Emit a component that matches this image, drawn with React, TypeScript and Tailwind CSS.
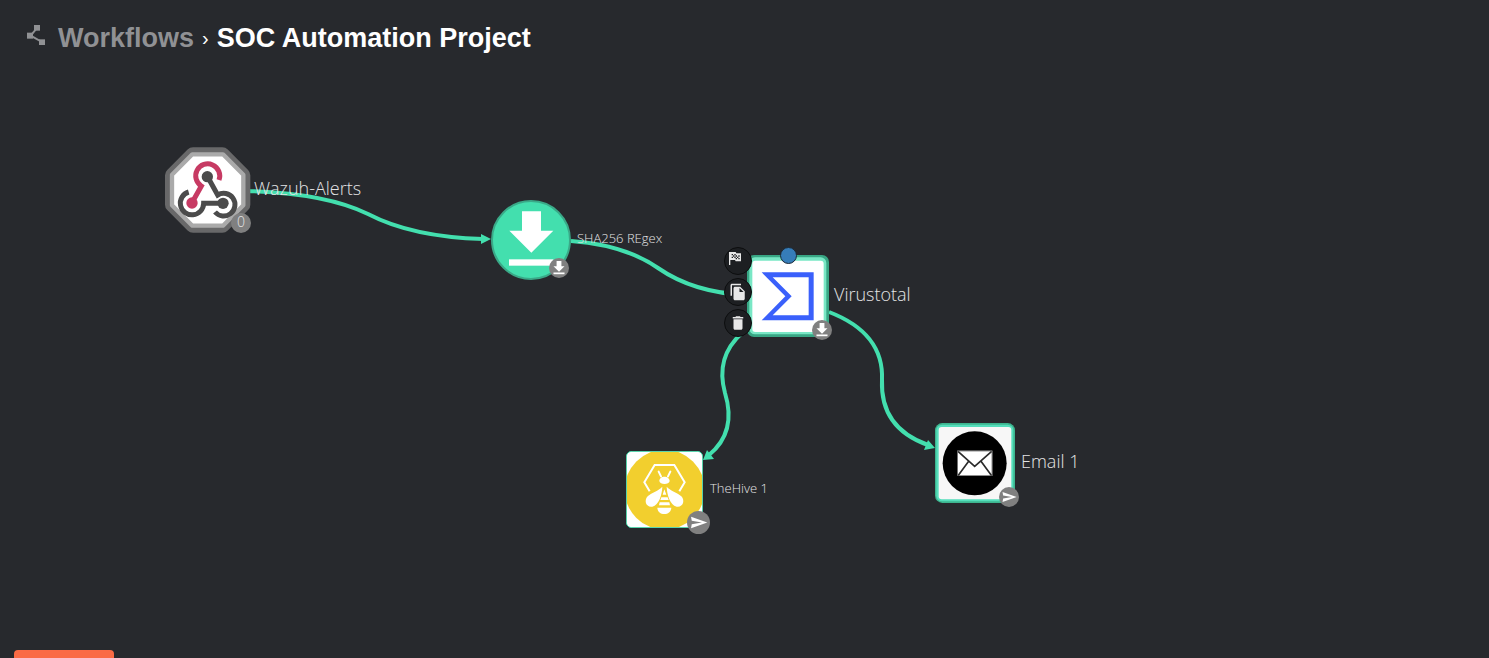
import type { ReactNode } from "react";
import { MdDelete, MdFileCopy } from "react-icons/md";

function WorkflowIcon() {
  return (
    <svg viewBox="0 0 54 60" className="h-5 w-[18px] fill-[#909194]" aria-hidden="true">
      <path d="M29 10L11 32L45 51" fill="none" stroke="#909194" strokeWidth="6" />
      <rect x="21" width="18" height="17" />
      <rect y="23" width="18" height="18" />
      <rect x="36" y="43" width="18" height="17" />
    </svg>
  );
}

function WebhookNode() {
  return (
    <svg viewBox="45 36 258 258" className="size-[86px] shrink-0" aria-hidden="true">
      <g strokeLinejoin="round" transform="translate(173 165)">
        <path
          d="M-44 -105H44L105 -44V44L44 105H-44L-105 44V-44Z"
          fill="#aaaaaa"
          stroke="#686869"
          strokeWidth="46"
        />
        <path
          d="M-46 -107H46L107 -46V46L46 107H-46L-107 46V-46Z"
          fill="#ffffff"
          stroke="#aaaaaa"
          strokeWidth="13"
        />
      </g>
      <g fill="none" strokeWidth="15">
        <path d="M207 135A36 36 0 1 0 154 153L126 203" stroke="#c73a63" />
        <path d="M172 124L203 180A34 34 0 1 1 195 231" stroke="#4b4b4b" />
        <path d="M116 171A35 35 0 1 0 161 205H219" stroke="#4b4b4b" />
      </g>
      <circle cx="126" cy="204" r="17" fill="#c73a63" />
      <circle cx="172" cy="125" r="17" fill="#4b4b4b" />
      <circle cx="219" cy="205" r="17" fill="#4b4b4b" />
    </svg>
  );
}

function DownloadNode() {
  return (
    <svg viewBox="63 30 240 240" className="size-20 shrink-0" aria-hidden="true">
      <circle cx="183" cy="150" r="117" fill="#43dfae" stroke="#3aa988" strokeWidth="6" />
      <path d="M156 64H213V122H250L184 188L118 122H156Z" fill="#fff" />
      <rect x="117" y="208" width="133" height="19" fill="#fff" />
    </svg>
  );
}

function VirusTotalNode() {
  return (
    <svg viewBox="111 60 246 246" className="size-[82px] shrink-0" aria-hidden="true">
      <rect x="111" y="60" width="246" height="246" rx="21" fill="#38a684" />
      <rect x="118" y="67" width="231" height="231" rx="17" fill="#79e7c5" />
      <rect x="127" y="77" width="214" height="214" rx="9" fill="#fff" />
      <path
        fillRule="evenodd"
        fill="#3a60fb"
        d="M155 112H311V256H155L226 184ZM188 127L245 184L188 241H296V127Z"
      />
    </svg>
  );
}

function HiveNode() {
  return (
    <svg viewBox="48 63 231 231" className="size-[77px] shrink-0" aria-hidden="true">
      <defs>
        <clipPath id="hive-frame">
          <rect x="51" y="66" width="225" height="225" rx="14" />
        </clipPath>
      </defs>
      <rect x="49" y="64" width="229" height="229" rx="16" fill="#fff" stroke="#43d6a8" strokeWidth="3" />
      <circle cx="164" cy="179" r="120" fill="#f2cf2e" clipPath="url(#hive-frame)" />
      <path
        d="M119 184L103 157L134 105H193L224 157L208 184"
        fill="none"
        stroke="#fff"
        strokeWidth="6"
      />
      <path d="M146 125L153 139M181 125L174 139" stroke="#fff" strokeWidth="6" strokeLinecap="round" />
      <path d="M148 153C148 136 178 136 179 153C178 165 149 165 148 153Z" fill="#fff" />
      <path
        d="M157 170C156 195 147 224 127 230C108 233 101 212 113 199C126 187 145 183 157 170Z"
        fill="#fff"
      />
      <path
        d="M170 170C171 195 180 224 200 230C219 233 226 212 214 199C201 187 182 183 170 170Z"
        fill="#fff"
      />
      <path d="M163 178L169 194H158ZM154 202H173L176 210H151ZM149 217H178L180 226H147Z" fill="#fff" />
      <path d="M142 233H184C183 246 174 252 163 252C151 252 143 246 142 233Z" fill="#fff" />
    </svg>
  );
}

function EmailNode() {
  return (
    <svg viewBox="107 39 240 240" className="size-20 shrink-0" aria-hidden="true">
      <rect x="107" y="39" width="240" height="240" rx="22" fill="#3db58f" />
      <rect x="111" y="44" width="231" height="230" rx="17" fill="#55debb" />
      <rect x="118" y="51" width="218" height="217" rx="9" fill="#f7f7f7" />
      <circle cx="226" cy="160" r="96" fill="#000" />
      <rect x="174" y="122" width="105" height="76" fill="#fff" />
      <path
        d="M176 124L226 169L277 124M176 197L208 154M277 197L245 154"
        fill="none"
        stroke="#2b2b2b"
        strokeWidth="5"
      />
      <rect x="175" y="123" width="103" height="74" fill="none" stroke="#555" strokeWidth="2" />
    </svg>
  );
}

function DownloadBadge() {
  return (
    <svg viewBox="0 0 58 58" className="size-5" aria-hidden="true">
      <circle cx="29" cy="29" r="29" fill="#808080" />
      <path d="M22 9H36V24H45L29 40L13 24H22Z" fill="#fff" />
      <rect x="13" y="42" width="32" height="5" fill="#fff" />
    </svg>
  );
}

function SendBadge({ size }: { size: string }) {
  return (
    <svg viewBox="0 0 68 68" className={size} aria-hidden="true">
      <circle cx="34" cy="34" r="34" fill="#808080" />
      <path d="M12 17L60 34L12 51L14 39L44 34L14 29Z" fill="#fff" />
    </svg>
  );
}

function FlagIcon() {
  return (
    <svg viewBox="0 0 36 39" className="h-[13px] w-3" aria-hidden="true">
      <path fill="#e8e8e8" d="M0 0H20L22 4H36V28H20L18 24H4V39H0Z" />
      <path
        fill="#1d1f22"
        d="M8 6h4v4h-4zM16 6h4v4h-4zM12 10h4v4h-4zM20 10h4v4h-4zM28 10h4v4h-4zM8 14h4v4h-4zM16 14h4v4h-4zM24 14h4v4h-4zM20 18h4v4h-4zM28 18h4v4h-4z"
      />
    </svg>
  );
}

function ActionButton({ label, children }: { label: string; children: ReactNode }) {
  return (
    <button
      type="button"
      aria-label={label}
      className="flex size-7 items-center justify-center rounded-full border border-[#0c0d0e] bg-[#1d1f22] text-[#e8e8e8]"
    >
      {children}
    </button>
  );
}

function Edges() {
  return (
    <svg className="absolute inset-0 size-full" aria-hidden="true">
      <g transform="translate(0 -72)">
        <g fill="none" stroke="#43dfae" strokeWidth="4">
          <path d="M246 191Q325 193 368 214Q412 237 483 239" />
          <path d="M571 241Q625 245 658 268Q694 293 747 295" />
          <path d="M742 333Q715 357 725 393Q737 432 709 455" />
          <path d="M829 312Q884 333 882 380Q880 428 928 445" />
        </g>
        <g fill="#43dfae">
          <path d="M481 234L491 239L481 244Z" />
          <path d="M703 460L707 450L714 459Z" />
          <path d="M935 448L928 440L924 450Z" />
        </g>
      </g>
    </svg>
  );
}

const nodeClass = "absolute flex items-center whitespace-nowrap text-[#e4e4e5]";
const largeLabel = "pb-1 text-[18px] leading-6 font-light";
const smallLabel = "pb-1 text-[13px] leading-5 font-light";

export default function App() {
  return (
    <div className="flex h-screen flex-col overflow-hidden bg-[#27292d] font-['Liberation_Sans',sans-serif]">
      <header className="flex h-[72px] shrink-0 items-center pl-[27px]">
        <span className="pb-[2px]">
          <WorkflowIcon />
        </span>
        <h1 className="flex items-center gap-2 pt-[3px] pl-[13px] text-[27px] leading-8 font-bold text-white">
          <a href="#workflows" className="text-[#909194]">
            Workflows
          </a>
          <span className="text-xl leading-8 font-normal">›</span>
          <span>SOC Automation Project</span>
        </h1>
      </header>

      <main className="relative min-h-0 flex-1 font-['Open_Sans','Noto_Sans',sans-serif]">
        <Edges />

        <div className={`${nodeClass} top-[75px] left-[165px] gap-[3px]`}>
          <WebhookNode />
          <span className={largeLabel}>Wazuh-Alerts</span>
          <span className="absolute top-[66px] left-[66px] flex size-5 items-center justify-center rounded-full bg-[#808080] pb-[2px] text-sm leading-5 font-light">
            0
          </span>
        </div>

        <div className={`${nodeClass} top-32 left-[491px] gap-[6px]`}>
          <DownloadNode />
          <span className={smallLabel}>SHA256 REgex</span>
          <span className="absolute top-[58px] left-[58px]">
            <DownloadBadge />
          </span>
        </div>

        <div className={`${nodeClass} top-[183px] left-[747px] gap-[5px]`}>
          <VirusTotalNode />
          <span className={largeLabel}>Virustotal</span>
          <span className="absolute top-[65px] left-[65px]">
            <DownloadBadge />
          </span>
          <button
            type="button"
            aria-label="Connect"
            className="absolute -top-2 left-[33px] size-[17px] rounded-full border border-[#1b2a38] bg-[#367db9]"
          />
          <div className="absolute -top-2 -left-[23px] flex flex-col gap-[3px]">
            <ActionButton label="Set start node">
              <span className="pr-[7px] pb-[5px]">
                <FlagIcon />
              </span>
            </ActionButton>
            <ActionButton label="Copy node">
              <MdFileCopy className="size-[18px]" />
            </ActionButton>
            <ActionButton label="Delete node">
              <MdDelete className="size-[18px]" />
            </ActionButton>
          </div>
        </div>

        <div className={`${nodeClass} top-[379px] left-[626px] gap-[7px]`}>
          <HiveNode />
          <span className={smallLabel}>TheHive 1</span>
          <span className="absolute top-[60px] left-[61px]">
            <SendBadge size="size-[23px]" />
          </span>
        </div>

        <div className={`${nodeClass} top-[351px] left-[935px] gap-[6px]`}>
          <EmailNode />
          <span className={largeLabel}>Email 1</span>
          <span className="absolute top-16 left-16">
            <SendBadge size="size-5" />
          </span>
        </div>
      </main>

      <footer className="h-2 shrink-0 overflow-hidden pl-[14px]">
        <button
          type="button"
          aria-label="Run workflow"
          className="block h-10 w-[100px] rounded bg-[#fa6b45]"
        />
      </footer>
    </div>
  );
}
